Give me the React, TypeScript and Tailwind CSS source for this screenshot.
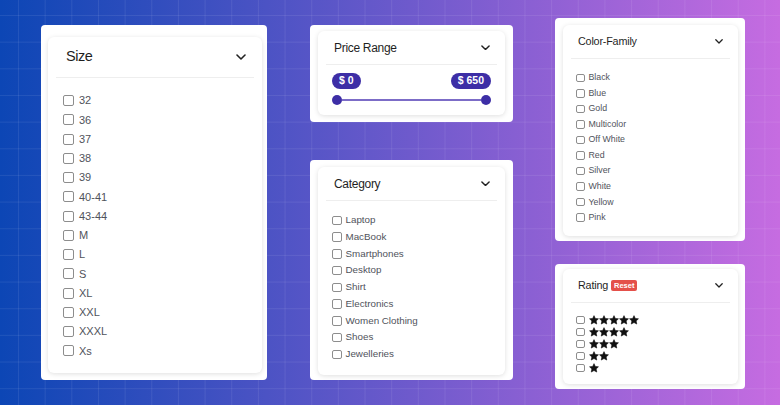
import React from 'react';

const SIZES = ['32', '36', '37', '38', '39', '40-41', '43-44', 'M', 'L', 'S', 'XL', 'XXL', 'XXXL', 'Xs'];
const CATEGORIES = ['Laptop', 'MacBook', 'Smartphones', 'Desktop', 'Shirt', 'Electronics', 'Women Clothing', 'Shoes', 'Jewelleries'];
const COLORS = ['Black', 'Blue', 'Gold', 'Multicolor', 'Off White', 'Red', 'Silver', 'White', 'Yellow', 'Pink'];

// small chevron used in every filter header
const Chevron = ({ w }: { w: number }) => (
  <svg width={w} height={w * 0.6} viewBox="0 0 10 6" fill="none" stroke="#222" strokeWidth={1.6} strokeLinecap="round" strokeLinejoin="round">
    <polyline points="1,1 5,5 9,1" />
  </svg>
);

const Star = () => (
  <svg width="10" height="10" viewBox="0 0 24 24" fill="#111" stroke="#111" strokeWidth={1.5} strokeLinejoin="round">
    <path d="M12 1.5l3.2 6.9 7.4.8-5.5 5.1 1.5 7.4L12 18l-6.6 3.7 1.5-7.4L1.4 9.2l7.4-.8z" />
  </svg>
);

export default function App() {
  return (
    <div className="w-[780px] h-[405px] overflow-hidden flex items-start font-['Liberation_Sans',Arial,sans-serif] bg-[linear-gradient(to_right,rgba(255,255,255,0.08)_1px,transparent_1px),linear-gradient(to_bottom,rgba(255,255,255,0.08)_1px,transparent_1px),linear-gradient(to_right,#0c46b5,#c66ce1)] bg-[size:26.67px_26.67px,26.67px_26.67px,100%_100%] bg-[position:18px_15px,18px_15px,0_0]">
      {/* Size */}
      <div className="ml-[41px] mt-[25px] w-[226px] h-[355px] bg-white rounded-[4px] pt-[12px] pl-[7px] pr-[5px] pb-[7px]">
        <div className="h-full bg-white rounded-[6px] shadow-[0_1px_5px_rgba(0,0,0,0.13)]">
          <div className="h-[40px] pl-[18px] pr-[16px] flex items-center justify-between">
            <span className="text-[14.5px] tracking-[-0.5px] text-[#1f1f1f]">Size</span>
            <Chevron w={10} />
          </div>
          <div className="mx-[8px] border-t border-[#eeeeee]" />
          <div className="pt-[13px] px-[15px]">
            {SIZES.map((s) => (
              <div key={s} className="h-[19.25px] flex items-center gap-[5px]">
                <span className="w-[11px] h-[11px] border border-[#8d8d8d] rounded-[2px] bg-white" />
                <span className="text-[11px] text-[#50535b]">{s}</span>
              </div>
            ))}
          </div>
        </div>
      </div>

      <div className="ml-[43px] mt-[25px] w-[203px] flex flex-col gap-[38px]">
        {/* Price Range */}
        <div className="h-[97px] bg-white rounded-[4px] pt-[6px] pl-[8px] pr-[8px] pb-[7px]">
          <div className="h-full bg-white rounded-[6px] shadow-[0_1px_5px_rgba(0,0,0,0.13)]">
            <div className="h-[33px] pl-[16px] pr-[15px] flex items-center justify-between">
              <span className="text-[12px] tracking-[-0.3px] text-[#1f1f1f]">Price Range</span>
              <Chevron w={9} />
            </div>
            <div className="mx-[8px] border-t border-[#eeeeee]" />
            <div className="px-[14px] pt-[8px]">
              <div className="flex justify-between">
                <span className="h-[16px] px-[7px] rounded-full bg-[#3d2ea6] text-white text-[10.5px] font-semibold flex items-center">$ 0</span>
                <span className="h-[16px] px-[7px] rounded-full bg-[#3d2ea6] text-white text-[10.5px] font-semibold flex items-center">$ 650</span>
              </div>
              <div className="mt-[6px] h-[10px] flex items-center">
                <span className="w-[10px] h-[10px] rounded-full bg-[#3d2ea6]" />
                <span className="flex-1 h-[2px] bg-[#7c6cc7]" />
                <span className="w-[10px] h-[10px] rounded-full bg-[#3d2ea6]" />
              </div>
            </div>
          </div>
        </div>

        {/* Category */}
        <div className="h-[220px] bg-white rounded-[4px] pt-[7px] pl-[8px] pr-[8px] pb-[5px]">
          <div className="h-full bg-white rounded-[6px] shadow-[0_1px_5px_rgba(0,0,0,0.13)]">
            <div className="h-[33px] pl-[16px] pr-[15px] flex items-center justify-between">
              <span className="text-[12px] tracking-[-0.3px] text-[#1f1f1f]">Category</span>
              <Chevron w={9} />
            </div>
            <div className="mx-[8px] border-t border-[#eeeeee]" />
            <div className="pt-[11px] px-[14px]">
              {CATEGORIES.map((c) => (
                <div key={c} className="h-[16.75px] flex items-center gap-[4px]">
                  <span className="w-[9.5px] h-[9.5px] border border-[#8d8d8d] rounded-[2px] bg-white" />
                  <span className="text-[9.8px] text-[#50535b]">{c}</span>
                </div>
              ))}
            </div>
          </div>
        </div>
      </div>

      <div className="ml-[42px] mt-[18px] w-[190px] flex flex-col gap-[23px]">
        {/* Color-Family */}
        <div className="h-[223px] bg-white rounded-[4px] pt-[7px] pl-[8px] pr-[7px] pb-[5px]">
          <div className="h-full bg-white rounded-[6px] shadow-[0_1px_5px_rgba(0,0,0,0.13)]">
            <div className="h-[33px] pl-[15px] pr-[15px] flex items-center justify-between">
              <span className="text-[10.8px] tracking-[-0.2px] text-[#1f1f1f]">Color-Family</span>
              <Chevron w={8} />
            </div>
            <div className="mx-[8px] border-t border-[#eeeeee]" />
            <div className="pt-[11px] px-[13px]">
              {COLORS.map((c) => (
                <div key={c} className="h-[15.55px] flex items-center gap-[4px]">
                  <span className="w-[8.5px] h-[8.5px] border border-[#8d8d8d] rounded-[2px] bg-white" />
                  <span className="text-[8.8px] text-[#50535b]">{c}</span>
                </div>
              ))}
            </div>
          </div>
        </div>

        {/* Rating */}
        <div className="h-[125px] bg-white rounded-[4px] pt-[5px] pl-[8px] pr-[7px] pb-[5px]">
          <div className="h-full bg-white rounded-[6px] shadow-[0_1px_5px_rgba(0,0,0,0.13)]">
            <div className="h-[33px] pl-[15px] pr-[15px] flex items-center justify-between">
              <div className="flex items-center gap-[3px]">
                <span className="text-[10.8px] tracking-[-0.2px] text-[#1f1f1f]">Rating</span>
                <span className="h-[11px] px-[3px] rounded-[2px] bg-[#e4504a] text-white text-[7.5px] font-semibold flex items-center">Reset</span>
              </div>
              <Chevron w={8} />
            </div>
            <div className="mx-[8px] border-t border-[#eeeeee]" />
            <div className="pt-[11px] px-[13px]">
              {[5, 4, 3, 2, 1].map((n) => (
                <div key={n} className="h-[12px] flex items-center gap-[4px]">
                  <span className="w-[8.5px] h-[8.5px] border border-[#8d8d8d] rounded-[2px] bg-white" />
                  <span className="flex">
                    {Array.from({ length: n }).map((_, i) => (
                      <Star key={i} />
                    ))}
                  </span>
                </div>
              ))}
            </div>
          </div>
        </div>
      </div>
    </div>
  );
}
